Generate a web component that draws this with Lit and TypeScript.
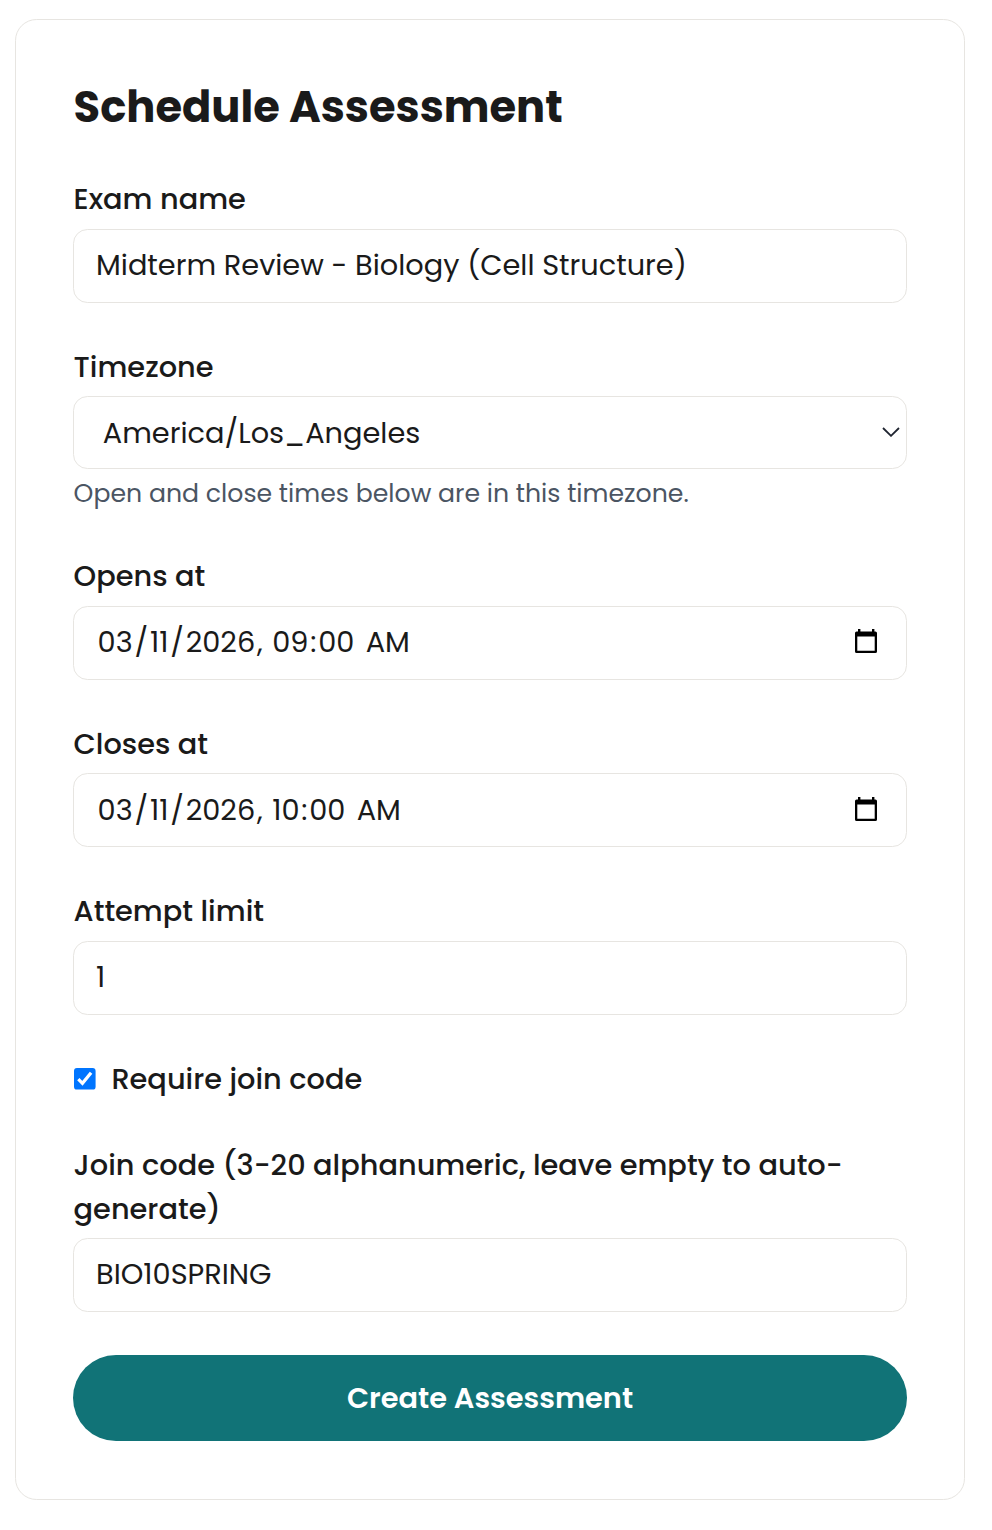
import { LitElement, html, css, svg } from "lit";
import { customElement, property } from "lit/decorators.js";

const calendar = svg`
  <path d="M3 0H5.4V2.4H17V0H19.4V2.4H20.4Q22 2.4 22 4V22.4Q22 24 20.4 24H1.6Q0 24 0 22.4V4Q0 2.4 1.6 2.4H3ZM2.3 7.4V21.8H19.7V7.4Z" fill="#000" fill-rule="evenodd"/>`;

@customElement("date-field")
export class DateField extends LitElement {
  @property() hour = "";

  static styles = css`
    :host {
      display: flex;
      align-items: center;
      flex: 1;
    }
    .value {
      display: flex;
      flex: 1;
      margin-left: 21.8px;
      white-space: pre;
    }
    .part { padding: 0 1.8px; }
    svg {
      display: block;
      width: 22px;
      height: 24px;
      margin: 0 29px 2px 0;
    }
  `;

  render() {
    return html`
      <div class="value"><span class="part">03</span><span>/</span><span class="part">11</span><span>/</span><span class="part">2026</span><span>, </span><span class="part">${this.hour}</span><span>:</span><span class="part">00</span><span> </span><span class="part">AM</span></div>
      <svg viewBox="0 0 22 24">${calendar}</svg>
    `;
  }
}

@customElement("app-root")
export class AppRoot extends LitElement {
  static styles = css`
    :host {
      display: block;
      box-sizing: border-box;
      height: 1530px;
      padding: 19px 27px 30px 15px;
      background: #fff;
      color: #1a1a1a;
      font-family: Poppins, Inter, "Open Sans", sans-serif;
      font-size: 28.8px;
      line-height: 44px;
    }
    .card {
      box-sizing: border-box;
      height: 1481px;
      border: 1px solid #e7e5e1;
      border-radius: 21.6px;
      padding: 54px 57px 57px;
    }
    h1 {
      margin: 0 0 37px;
      padding-left: 0.6px;
      font-size: 43.2px;
      font-weight: 700;
      line-height: 66px;
    }
    .label {
      padding-left: 0.6px;
      font-weight: 500;
      margin-bottom: 8px;
    }
    .label.tight { margin-bottom: 7px; }
    .box {
      box-sizing: border-box;
      display: flex;
      align-items: center;
      height: 74px;
      border: 1px solid #e7e5e1;
      border-radius: 14.4px;
      padding-bottom: 2px;
      margin-bottom: 42px;
      white-space: nowrap;
    }
    .box.select {
      height: 73px;
      padding-bottom: 0;
      margin-bottom: 6px;
      justify-content: space-between;
    }
    .box.closes { padding-bottom: 1px; }
    .text { margin-left: 22px; }
    .zone { margin-left: 28.8px; }
    .chevron {
      display: block;
      width: 18px;
      height: 10px;
      margin: 0 6px 2px 0;
    }
    .hint {
      height: 38px;
      line-height: 38px;
      margin-bottom: 41px;
      padding-left: 0.6px;
      color: #4b5563;
      font-size: 25.2px;
    }
    .check {
      display: flex;
      align-items: center;
      gap: 15.8px;
      margin-bottom: 42px;
      padding-left: 1px;
      font-weight: 500;
    }
    .check svg {
      display: block;
      width: 21.6px;
      height: 21.6px;
    }
    .button {
      display: block;
      width: 100%;
      height: 86px;
      margin: 43px 0 0;
      padding: 0;
      border: 0;
      border-radius: 43px;
      background: #117377;
      color: #fff;
      font: inherit;
      font-weight: 600;
    }
  `;

  render() {
    return html`
      <div class="card">
        <h1>Schedule Assessment</h1>
        <div class="label">Exam name</div>
        <div class="box"><span class="text">Midterm Review - Biology (Cell Structure)</span></div>

        <div class="label tight">Timezone</div>
        <div class="box select">
          <span class="zone">America/Los_Angeles</span>
          <svg class="chevron" viewBox="0 0 18 10"><path d="M1 1 9 8.8 17 1" fill="none" stroke="#1f2430" stroke-width="1.8"/></svg>
        </div>
        <div class="hint">Open and close times below are in this timezone.</div>

        <div class="label">Opens at</div>
        <div class="box"><date-field hour="09"></date-field></div>

        <div class="label tight">Closes at</div>
        <div class="box closes"><date-field hour="10"></date-field></div>

        <div class="label">Attempt limit</div>
        <div class="box"><span class="text">1</span></div>

        <div class="check">
          <svg viewBox="0 0 22 22"><rect width="22" height="22" rx="3" fill="#0075ff"/><path d="M4.4 11.4 8.6 15.6 17.4 4.8" fill="none" stroke="#fff" stroke-width="3.3"/></svg>
          <span>Require join code</span>
        </div>

        <div class="label tight">Join code (3-20 alphanumeric, leave empty to auto-<br>generate)</div>
        <div class="box"><span class="text">BIO10SPRING</span></div>

        <button class="button">Create Assessment</button>
      </div>
    `;
  }
}
